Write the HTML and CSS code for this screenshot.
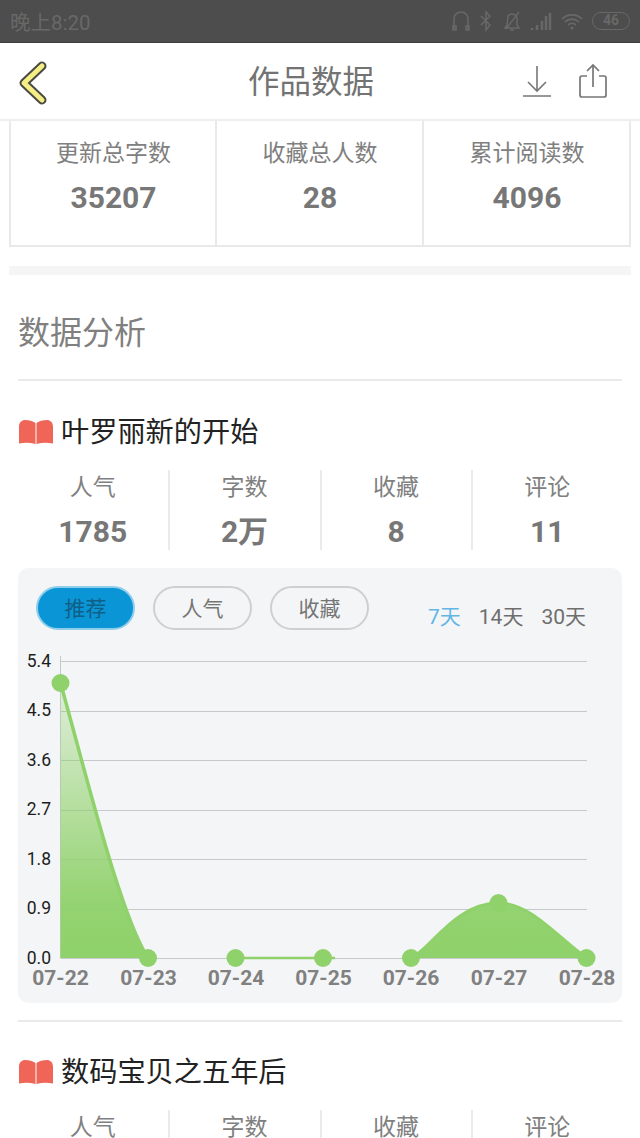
FILE: index.html
```html
<!DOCTYPE html>
<html lang="zh">
<head>
<meta charset="utf-8">
<title>作品数据</title>
<link rel="stylesheet" href="styles.css">
</head>
<body>
<div class="statusbar">
  <span class="time">晚上8:20</span>
  <div class="status-icons">
    <svg class="icon-headset" width="18" height="22" viewBox="0 0 18 22"><path d="M2 19V9a7 7 0 0 1 14 0v10M1 16v4h3v-4zM14 16v4h3v-4z" fill="none" stroke="#686868" stroke-width="1.600"/></svg>
    <svg width="12" height="22" viewBox="0 0 12 22"><path d="M1 6l9 9-4 5V2l4 4-9 9" fill="none" stroke="#686868" stroke-width="1.500"/></svg>
    <svg class="icon-bell" width="18" height="22" viewBox="0 0 18 22"><path d="M2 18h14l-2-3V9a5 5 0 0 0-9-3L4 15zM7 20h4M3 19L16 2" fill="none" stroke="#686868" stroke-width="1.500"/></svg>
    <svg width="22" height="22" viewBox="0 0 22 22"><path d="M2 20v-2M7 20v-5M12 20v-9M16 20V6M20 20V3" stroke="#686868" stroke-width="2.500"/></svg>
    <svg width="22" height="22" viewBox="0 0 22 22"><path d="M1 9a14 14 0 0 1 20 0M4 12a10 10 0 0 1 14 0M7 15a6 6 0 0 1 8 0" fill="none" stroke="#686868" stroke-width="1.700"/><circle cx="11" cy="18" r="1.600" fill="#686868"/></svg>
    <span class="battery">46</span>
  </div>
</div>

<header class="topbar">
  <svg class="back" width="32" height="48" viewBox="0 0 32 48"><path d="M25 7L7 24l18 17" fill="none" stroke="#4a4a44" stroke-width="9" stroke-linecap="round" stroke-linejoin="round"/><path d="M25 7L7 24l18 17" fill="none" stroke="#f5ee85" stroke-width="5" stroke-linecap="round" stroke-linejoin="round"/></svg>
  <h1 class="title">作品数据</h1>
  <div class="actions">
    <svg width="30" height="34" viewBox="0 0 30 34"><path d="M15 2v24M6 18l9 9 9-9M1 32h28" fill="none" stroke="#777" stroke-width="1.600"/></svg>
    <svg width="30" height="36" viewBox="0 0 30 36"><path d="M9 13H4a2 2 0 0 0-2 2v17a2 2 0 0 0 2 2h22a2 2 0 0 0 2-2V15a2 2 0 0 0-2-2h-5M15 24V2M9 8l6-6 6 6" fill="none" stroke="#777" stroke-width="1.700"/></svg>
  </div>
</header>

<section class="totals">
  <div class="total"><span class="total-label">更新总字数</span><strong class="total-num">35207</strong></div>
  <div class="total"><span class="total-label">收藏总人数</span><strong class="total-num">28</strong></div>
  <div class="total"><span class="total-label">累计阅读数</span><strong class="total-num">4096</strong></div>
</section>

<div class="band"></div>

<main class="analysis">
  <h2 class="analysis-title">数据分析</h2>

  <article class="work">
    <h3 class="work-title">
      <svg class="book" width="34" height="24" viewBox="0 0 34 24"><path d="M16.500 3C14 1 10 0 6 0 3 0 0 2 0 7v16.500c5-1 11-1 16.500.5zM17.500 3C20 1 24 0 28 0c3 0 6 2 6 7v16.500c-5-1-11-1-16.500.5z" fill="#ef6558"/></svg>
      叶罗丽新的开始
    </h3>
    <div class="metrics">
      <div class="metric"><span class="metric-label">人气</span><strong class="metric-num">1785</strong></div>
      <div class="metric"><span class="metric-label">字数</span><strong class="metric-num">2万</strong></div>
      <div class="metric"><span class="metric-label">收藏</span><strong class="metric-num">8</strong></div>
      <div class="metric"><span class="metric-label">评论</span><strong class="metric-num">11</strong></div>
    </div>
    <div class="chart-card">
      <div class="chart-controls">
        <div class="tabs">
          <span class="tab tab-active">推荐</span>
          <span class="tab">人气</span>
          <span class="tab">收藏</span>
        </div>
        <div class="ranges">
          <span class="range range-active">7天</span>
          <span class="range">14天</span>
          <span class="range">30天</span>
        </div>
      </div>
      <svg class="chart" width="604" height="355" viewBox="18 648 604 355">
        <defs>
          <linearGradient id="fade" gradientUnits="userSpaceOnUse" x1="0" y1="683" x2="0" y2="958">
            <stop offset="0" stop-color="#8fd16a" stop-opacity="0.200"/>
            <stop offset="0.800" stop-color="#8fd16a" stop-opacity="0.950"/>
            <stop offset="1" stop-color="#8fd16a"/>
          </linearGradient>
        </defs>
        <g stroke="#c6c8ca" stroke-width="1">
          <path d="M60.500 656V958"/>
          <path d="M60.500 661.500H587M60.500 711.500H587M60.500 760.500H587M60.500 810.500H587M60.500 859.500H587M60.500 909.500H587M60.500 958.500H587"/>
        </g>
        <path d="M60.500 958V683C85 770 120 915 148 958Z" fill="url(#fade)"/>
        <path d="M411 958C430 950 455 903 498.500 903C530 903 555 935 586.500 958Z" fill="url(#fade)"/>
        <path d="M60.500 683C85 770 120 915 148 958" fill="none" stroke="#8fd16a" stroke-width="3.500"/>
        <path d="M235.500 958H335" fill="none" stroke="#8fd16a" stroke-width="2.500"/>
        <path d="M411 958C430 950 455 903 498.500 903C530 903 555 935 586.500 958" fill="none" stroke="#8fd16a" stroke-width="3"/>
        <g fill="#8fd16a">
          <circle cx="60.500" cy="683" r="9"/><circle cx="148" cy="958" r="9"/><circle cx="235.500" cy="958" r="9"/><circle cx="323" cy="958" r="9"/><circle cx="411" cy="958" r="9"/><circle cx="498.500" cy="903" r="9"/><circle cx="586.500" cy="958" r="9"/>
        </g>
        <g class="y-labels" text-anchor="end">
          <text x="51" y="667">5.4</text><text x="51" y="716">4.5</text><text x="51" y="766">3.6</text><text x="51" y="815">2.7</text><text x="51" y="865">1.8</text><text x="51" y="914">0.9</text><text x="51" y="964">0.0</text>
        </g>
        <g class="x-labels" text-anchor="middle">
          <text x="60.500" y="985">07-22</text><text x="148.500" y="985">07-23</text><text x="236" y="985">07-24</text><text x="323.500" y="985">07-25</text><text x="411" y="985">07-26</text><text x="499" y="985">07-27</text><text x="587" y="985">07-28</text>
        </g>
      </svg>
    </div>
  </article>

  <article class="work work-next">
    <h3 class="work-title">
      <svg class="book" width="34" height="24" viewBox="0 0 34 24"><path d="M16.500 3C14 1 10 0 6 0 3 0 0 2 0 7v16.500c5-1 11-1 16.500.5zM17.500 3C20 1 24 0 28 0c3 0 6 2 6 7v16.500c-5-1-11-1-16.500.5z" fill="#ef6558"/></svg>
      数码宝贝之五年后
    </h3>
    <div class="metrics">
      <div class="metric"><span class="metric-label">人气</span></div>
      <div class="metric"><span class="metric-label">字数</span></div>
      <div class="metric"><span class="metric-label">收藏</span></div>
      <div class="metric"><span class="metric-label">评论</span></div>
    </div>
  </article>
</main>
</body>
</html>
```

FILE: styles.css
```css
* { box-sizing: border-box; }
html, body { margin: 0; padding: 0; }
body {
  width: 640px;
  height: 1138px;
  overflow: hidden;
  background: #fff;
  font-family: Roboto, "Noto Sans CJK SC", sans-serif;
  color: #777;
}
h1, h2, h3 { margin: 0; font-weight: 400; }

.statusbar {
  height: 43px;
  background: #4d4d4d;
  border-bottom: 1px solid #3c3c3c;
  display: flex;
  align-items: center;
  justify-content: space-between;
  padding: 0 10px;
  color: #686868;
}
.time { font-size: 20.500px; }
.status-icons { display: flex; align-items: center; gap: 9px; }
.icon-headset { margin-right: 1px; }
.icon-bell { margin-left: 2px; }
.battery {
  width: 38px;
  height: 18px;
  border: 1.500px solid #686868;
  border-radius: 10px;
  font-size: 14px;
  font-weight: 700;
  line-height: 15px;
  text-align: center;
}

.topbar {
  height: 78px;
  display: flex;
  align-items: center;
  justify-content: space-between;
  padding: 0 32px 0 17px;
  border-bottom: 2px solid #eeeeee;
  position: relative;
}
.back { position: relative; top: 2px; }
.title {
  position: absolute;
  left: 0;
  right: 0;
  top: 1px;
  text-align: center;
  font-size: 31.500px;
  line-height: 78px;
  padding-right: 18px;
  color: #737373;
}
.actions { display: flex; align-items: center; gap: 26px; }

.totals {
  margin: 0 9px;
  height: 126px;
  display: grid;
  grid-template-columns: 206px 207px 1fr;
  border: 2px solid #e9e9e9;
  border-top: 0;
}
.total {
  display: flex;
  flex-direction: column;
  align-items: center;
  padding: 15px 0 0 1px;
  border-right: 2px solid #e9e9e9;
}
.total:last-child { border-right: 0; }
.total-label { font-size: 23px; line-height: 36px; color: #808080; }
.total-num { font-size: 30px; line-height: 42px; margin-top: 5px; color: #777; }

.band { height: 9px; margin: 19px 9px 0; background: #f5f5f5; }

.analysis { padding: 0 18px; }
.analysis-title {
  height: 106px;
  font-size: 32px;
  line-height: 116px;
  color: #808080;
  border-bottom: 2px solid #eaeaea;
}

.work-title {
  display: flex;
  align-items: center;
  gap: 8px;
  height: 50px;
  margin-top: 25px;
  padding-top: 4px;
  font-size: 28.200px;
  line-height: 46px;
  color: #222;
  white-space: nowrap;
}
.book { margin: -3px 0 0 1px; }
.metrics {
  margin-top: 14px;
  display: grid;
  grid-template-columns: 151.500px 152px 151px 1fr;
}
.metric {
  height: 80px;
  display: flex;
  flex-direction: column;
  align-items: center;
  padding-top: 1px;
  border-right: 2px solid #eaeaea;
}
.metric:last-child { border-right: 0; }
.metric-label { font-size: 23px; line-height: 34px; color: #808080; }
.metric-num { font-size: 30px; line-height: 42px; margin-top: 6px; color: #777; }

.chart-card {
  margin-top: 18px;
  height: 435px;
  background: #f4f5f7;
  border-radius: 10px;
  overflow: hidden;
}
.chart-controls {
  height: 80px;
  display: flex;
  justify-content: space-between;
  padding: 18px 36px 0 18px;
}
.tabs { display: flex; gap: 18px; align-items: flex-start; }
.tab {
  width: 99px;
  height: 44px;
  border: 2px solid #cfcfcf;
  border-radius: 22px;
  font-size: 21px;
  line-height: 42px;
  text-align: center;
  color: #757575;
}
.tab-active {
  background: #0a96d6;
  border-color: #8fcdea;
  color: #0f5f86;
}
.ranges { display: flex; gap: 18px; padding-top: 13px; }
.range { font-size: 21px; line-height: 36px; color: #6e6e6e; }
.range-active { color: #62b6e6; }

.chart { display: block; }
.y-labels { font-size: 17.500px; fill: #1d1d1d; }
.x-labels { font-size: 21px; font-weight: 700; fill: #808080; }

.work-next { border-top: 2px solid #eaeaea; margin-top: 17px; }
.work-next .work-title { margin-top: 24px; }
```
